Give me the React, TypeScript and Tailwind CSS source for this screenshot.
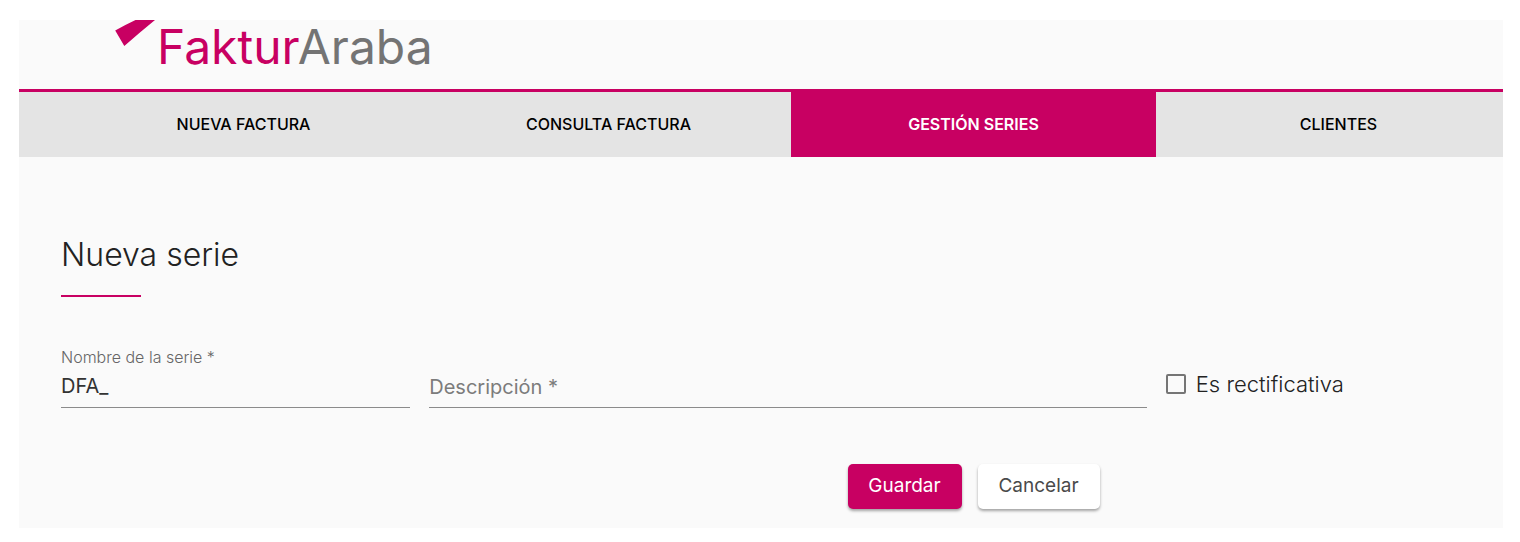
const tabs = [
  { label: "NUEVA FACTURA", active: false },
  { label: "CONSULTA FACTURA", active: false },
  { label: "GESTIÓN SERIES", active: true },
  { label: "CLIENTES", active: false },
];

function Header() {
  return (
    <header className="flex h-[72px] items-start border-b-[3px] border-[#c80062] pl-24">
      <svg className="h-7 w-10 shrink-0" viewBox="0 0 40 28" aria-hidden="true">
        <path d="M0.2 10.4 Q10 5 20.5 0 H40 Q24.5 12.6 9.3 26 Z" fill="#c80062" />
      </svg>
      <a href="#inicio" className="mt-1 ml-[2px] text-5xl leading-[46px] text-[#747474]">
        <span className="text-[#c80062]">Faktur</span>Araba
      </a>
    </header>
  );
}

function Tabs() {
  return (
    <nav className="overflow-x-clip bg-[#e4e4e4] pl-[42px]">
      <div className="-mr-[18px] grid grid-cols-4">
        {tabs.map((tab) => (
          <a
            key={tab.label}
            href="#"
            aria-current={tab.active ? "page" : undefined}
            className={
              tab.active
                ? "flex h-[65px] items-center justify-center bg-[#c80062] pb-[2px] text-base font-semibold text-white"
                : "flex h-[65px] items-center justify-center pb-[2px] text-base font-medium text-black"
            }
          >
            {tab.label}
          </a>
        ))}
      </div>
    </nav>
  );
}

function SeriesForm() {
  return (
    <form className="-mr-[18px]">
      <div className="mr-[6px] grid grid-cols-4 items-end gap-x-[19px]">
        <div className="flex flex-col">
          <label htmlFor="nombre" className="text-base leading-5 font-light text-[#666]">
            Nombre de la serie *
          </label>
          <input
            id="nombre"
            type="text"
            defaultValue="DFA_"
            className="h-[41px] w-full border-b border-[#8b8b8b] bg-transparent pb-[2px] text-xl text-[#333] outline-none"
          />
        </div>
        <input
          aria-label="Descripción"
          type="text"
          placeholder="Descripción *"
          className="col-span-2 h-[41px] w-full border-b border-[#8b8b8b] bg-transparent text-xl text-[#333] outline-none placeholder:text-[#7c7c7c]"
        />
        <label className="flex h-12 items-center gap-[10px] text-[22px] font-light text-[#222]">
          <input
            type="checkbox"
            className="size-5 appearance-none rounded-[2px] border-2 border-[#757575] checked:bg-[#c80062]"
          />
          Es rectificativa
        </label>
      </div>
      <div className="mt-14 grid grid-cols-4">
        <div className="col-start-3 flex justify-center gap-4">
          <button
            type="submit"
            className="h-[45px] w-[114px] rounded-[5px] bg-[#c80062] text-[19px] text-white shadow-[0_2px_3px_rgba(0,0,0,0.35)]"
          >
            Guardar
          </button>
          <button
            type="button"
            className="h-[45px] w-[122px] rounded-[5px] bg-white text-[19px] text-[#4a4a4a] shadow-[0_2px_3px_rgba(0,0,0,0.35)]"
          >
            Cancelar
          </button>
        </div>
      </div>
    </form>
  );
}

export default function App() {
  return (
    <div className="bg-white pt-5 pr-[17px] pb-[14px] pl-[19px] font-['Inter','Open_Sans',sans-serif]">
      <div className="bg-[#fafafa]">
        <Header />
        <Tabs />
        <main className="overflow-x-clip pt-20 pb-[19px] pl-[42px]">
          <h1 className="text-[32px] leading-9 font-light text-[#222]">Nueva serie</h1>
          <div className="mt-[22px] mb-[50px] h-[2px] w-20 bg-[#c80062]" />
          <SeriesForm />
        </main>
      </div>
    </div>
  );
}
